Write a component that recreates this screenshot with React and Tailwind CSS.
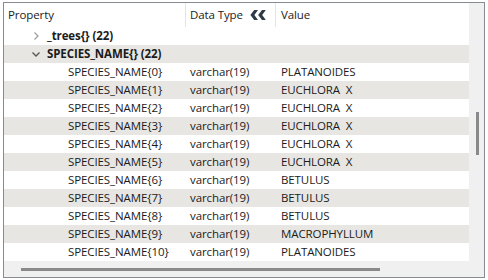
const rows = [
  { name: 'SPECIES_NAME{0}', value: 'PLATANOIDES' },
  { name: 'SPECIES_NAME{1}', value: 'EUCHLORA  X' },
  { name: 'SPECIES_NAME{2}', value: 'EUCHLORA  X' },
  { name: 'SPECIES_NAME{3}', value: 'EUCHLORA  X' },
  { name: 'SPECIES_NAME{4}', value: 'EUCHLORA  X' },
  { name: 'SPECIES_NAME{5}', value: 'EUCHLORA  X' },
  { name: 'SPECIES_NAME{6}', value: 'BETULUS' },
  { name: 'SPECIES_NAME{7}', value: 'BETULUS' },
  { name: 'SPECIES_NAME{8}', value: 'BETULUS' },
  { name: 'SPECIES_NAME{9}', value: 'MACROPHYLLUM' },
  { name: 'SPECIES_NAME{10}', value: 'PLATANOIDES' },
]

function Chevron({ open }) {
  return open ? (
    <svg width="8" height="5" viewBox="0 0 8 5" className="text-[#555]">
      <path d="M0.5 0.5 L4 4 L7.5 0.5" fill="none" stroke="currentColor" strokeWidth="1.3" />
    </svg>
  ) : (
    <svg width="5" height="8" viewBox="0 0 5 8" className="text-[#a0a0a0]">
      <path d="M0.5 0.5 L4 4 L0.5 7.5" fill="none" stroke="currentColor" strokeWidth="1.3" />
    </svg>
  )
}

function Collapse() {
  return (
    <svg width="16" height="10" viewBox="0 0 16 10" className="text-[#2e3a48]">
      <path d="M4.2 0 H8 L4.4 5 L8 10 H4.2 L0.4 5 Z" fill="currentColor" />
      <path d="M12 0 H15.8 L12.2 5 L15.8 10 H12 L8.2 5 Z" fill="currentColor" />
    </svg>
  )
}

function Row({ shaded, children }) {
  return (
    <div className={`flex h-[18px] items-center leading-[18px] ${shaded ? 'bg-[#e7e6e3]' : 'bg-white'}`}>
      {children}
    </div>
  )
}

export default function App() {
  return (
    <div className="pl-[3px] pt-[2px] text-[11.5px] tracking-[-0.1px] text-[#1b1b1b]" style={{ fontFamily: '"Open Sans", "Noto Sans", sans-serif' }}>
      <div className="grid h-[276px] w-[482px] grid-cols-[465px_15px] grid-rows-[258px_16px] border border-[#878b94] bg-[#f0f0f0]">
        {/* table */}
        <div className="overflow-hidden bg-white">
          <div className="flex h-[24px] items-center">
            <div className="flex h-full w-[182px] items-center border-r border-[#e4e4e4] pl-[4px]">Property</div>
            <div className="flex h-full w-[90px] items-center border-r border-[#e4e4e4] pl-[4px]">
              <span>Data Type</span>
              <span className="ml-[7px] flex"><Collapse /></span>
            </div>
            <div className="flex h-full items-center pl-[5px]">Value</div>
          </div>

          <Row>
            <span className="flex w-[43px] justify-end pr-[8px]"><Chevron /></span>
            <span className="font-bold">_trees{'{}'} (22)</span>
          </Row>
          <Row shaded>
            <span className="flex w-[43px] justify-end pr-[7px]"><Chevron open /></span>
            <span className="font-bold">SPECIES_NAME{'{}'} (22)</span>
          </Row>
          {rows.map((r, i) => (
            <Row key={r.name} shaded={i % 2 === 1}>
              <span className="w-[186px] pl-[64px]">{r.name}</span>
              <span className="w-[91px]">varchar(19)</span>
              <span className="whitespace-pre">{r.value}</span>
            </Row>
          ))}
        </div>

        {/* vertical scrollbar */}
        <div className="pl-[7px] pt-[109px]">
          <div className="h-[43px] w-[3px] bg-[#8a8a8a]" />
        </div>

        {/* horizontal scrollbar */}
        <div className="pl-[17px] pt-[7px]">
          <div className="h-[3px] w-[359px] bg-[#8a8a8a]" />
        </div>
        <div />
      </div>
    </div>
  )
}
